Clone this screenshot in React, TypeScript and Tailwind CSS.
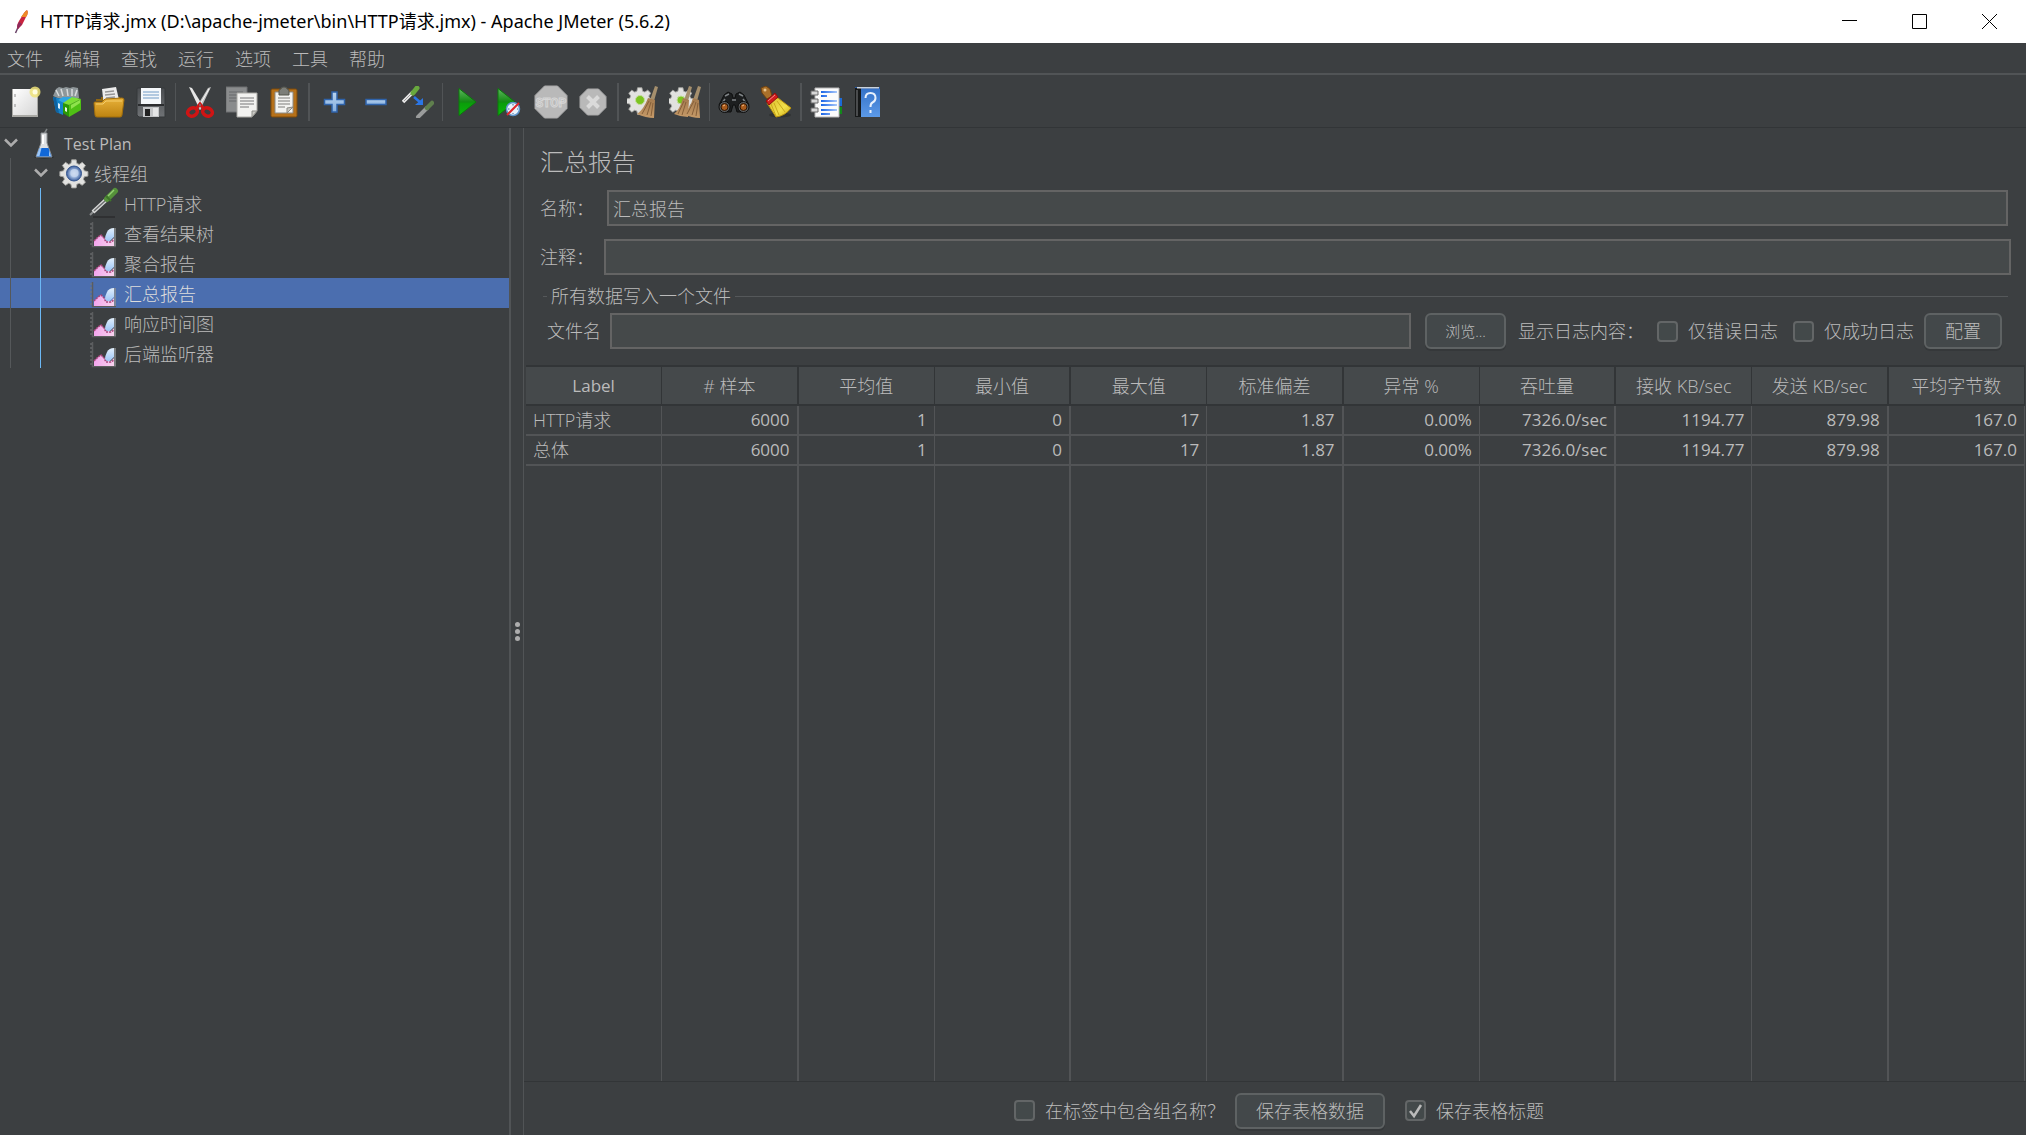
import React from 'react';

const menus = ['文件', '编辑', '查找', '运行', '选项', '工具', '帮助'];

const columns = ['Label', '# 样本', '平均值', '最小值', '最大值', '标准偏差', '异常 %', '吞吐量', '接收 KB/sec', '发送 KB/sec', '平均字节数'];

const rows = [
  ['HTTP请求', '6000', '1', '0', '17', '1.87', '0.00%', '7326.0/sec', '1194.77', '879.98', '167.0'],
  ['总体', '6000', '1', '0', '17', '1.87', '0.00%', '7326.0/sec', '1194.77', '879.98', '167.0'],
];

/* ---------- icons ---------- */

const Svg: React.FC<{ children: React.ReactNode }> = ({ children }) => (
  <svg viewBox="0 0 32 32" className="h-8 w-8 shrink-0" aria-hidden="true">
    {children}
  </svg>
);

// Shared gradients, referenced by id from every icon
const Gradients = () => (
  <svg className="absolute h-0 w-0" aria-hidden="true">
    <defs>
      <linearGradient id="paper" x1="0" y1="0" x2="1" y2="1">
        <stop offset="0" stopColor="#ffffff" />
        <stop offset="1" stopColor="#d6d6d6" />
      </linearGradient>
      <linearGradient id="gold" x1="0" y1="0" x2="0" y2="1">
        <stop offset="0" stopColor="#e8b13a" />
        <stop offset="1" stopColor="#bd8310" />
      </linearGradient>
      <linearGradient id="steel" x1="0" y1="0" x2="0" y2="1">
        <stop offset="0" stopColor="#4a4d50" />
        <stop offset="1" stopColor="#6f7275" />
      </linearGradient>
      <linearGradient id="play" x1="0" y1="0" x2="0" y2="1">
        <stop offset="0" stopColor="#5fb85f" />
        <stop offset="0.5" stopColor="#128a12" />
        <stop offset="0.55" stopColor="#0a9e0a" />
        <stop offset="1" stopColor="#0bb50b" />
      </linearGradient>
      <linearGradient id="plus" x1="0" y1="0" x2="0" y2="1">
        <stop offset="0" stopColor="#b9d3ee" />
        <stop offset="1" stopColor="#84afe0" />
      </linearGradient>
      <linearGradient id="straw" x1="0" y1="0" x2="0" y2="1">
        <stop offset="0" stopColor="#a3794d" />
        <stop offset="1" stopColor="#c69a68" />
      </linearGradient>
      <linearGradient id="yellow" x1="0" y1="0" x2="1" y2="1">
        <stop offset="0" stopColor="#d9bb2c" />
        <stop offset="0.6" stopColor="#f2e04a" />
        <stop offset="1" stopColor="#c7a312" />
      </linearGradient>
      <linearGradient id="cover" x1="0" y1="0" x2="0" y2="1">
        <stop offset="0" stopColor="#3572c8" />
        <stop offset="1" stopColor="#5c9ae8" />
      </linearGradient>
      <linearGradient id="ink" x1="0" y1="0" x2="1" y2="0">
        <stop offset="0" stopColor="#1763e6" />
        <stop offset="1" stopColor="#a9c8fb" />
      </linearGradient>
      <linearGradient id="pink" x1="0" y1="0" x2="1" y2="0">
        <stop offset="0" stopColor="#f3a5ee" />
        <stop offset="1" stopColor="#f8d3ee" />
      </linearGradient>
      <linearGradient id="sky" x1="0" y1="0" x2="0" y2="1">
        <stop offset="0" stopColor="#e2effc" />
        <stop offset="1" stopColor="#9cc5f7" />
      </linearGradient>
      <radialGradient id="hub">
        <stop offset="0" stopColor="#eef4ff" />
        <stop offset="0.5" stopColor="#a3bbe0" />
        <stop offset="1" stopColor="#3a5c9a" />
      </radialGradient>
    </defs>
  </svg>
);

const cog = 'M13.500 2h5l.8 4 2.600 1.100 3.400-2.300 3.500 3.500-2.300 3.400 1.100 2.600 4 .8v5l-4 .8-1.100 2.600 2.300 3.400-3.500 3.500-3.400-2.300-2.600 1.100-.8 4h-5l-.8-4-2.600-1.100-3.400 2.300-3.500-3.500 2.300-3.400-1.100-2.600-4-.8v-5l4-.8 1.100-2.600-2.300-3.400 3.500-3.500 3.400 2.300 2.600-1.100z';

const NewIcon = () => (
  <Svg>
    <path d="M3 3h26v28H3z" fill="#a9a9a5" />
    <path d="M4 3h24v26H4z" fill="url(#paper)" />
    <path d="M6 8v3M6 18v3" stroke="#8d8d8d" />
    <circle cx="26" cy="6" r="5.500" fill="#eee37a" opacity="0.85" />
    <circle cx="26" cy="6" r="2.500" fill="#fffde0" />
  </Svg>
);

const TemplatesIcon = () => (
  <Svg>
    <path d="M2 10l3-7 3-2 4 1 3-1 4 1 3-1 5 1 1 10-12 4z" fill="#8f979a" />
    <path d="M5 4l3 6M10 3l2 7M16 3l1 7M21 3l0 7M26 4l-2 6" stroke="#d6dadb" strokeWidth="1.500" />
    <path d="M2 11l10 2v16l-7-3z" fill="#1583c9" />
    <path d="M2 11l3 1 3 15-3-1z" fill="#0f62a0" />
    <path d="M7 14l5-3 12 0-4 5-7 1z" fill="#2fa4e4" />
    <path d="M7 17l2 1v5l-2-1z" fill="#d8eefb" />
    <path d="M12 17l6 2v12l-6-4z" fill="#2a9806" />
    <path d="M18 19l12-6v11l-12 7z" fill="#4fc014" />
    <path d="M12 17l9-6 9 2-12 6z" fill="#7ddf36" />
    <path d="M14 21l2 1v4l-2-1z" fill="#e8f6df" />
    <path d="M20 19l9-5v3l-9 6z" fill="#8fe24d" />
  </Svg>
);

const OpenIcon = () => (
  <Svg>
    <path d="M3 13h5v-2h19v4H3z" fill="#8f6612" />
    <path d="M9 3l14-2 4 17-16 2z" fill="#ececec" />
    <path d="M12 6l9-1M12 9l10-1M13 12l9-1" stroke="#969696" strokeWidth="1.500" />
    <path d="M1 17q0-1 1-1h7l3-3 17-1q2 0 2 2l-2 15q0 2-2 2H4q-2 0-2-2z" fill="url(#gold)" stroke="#a36f0b" />
    <path d="M3 18h7l3-3h16" fill="none" stroke="#f4cd6b" />
  </Svg>
);

const SaveIcon = () => (
  <Svg>
    <path d="M2 3q0-1 1-1h26q1 0 1 1v28H4l-2-2z" fill="url(#steel)" stroke="#35383a" />
    <path d="M6 2h20v16H6z" fill="#f4f7fa" />
    <path d="M8 6h16M8 9h16M8 12h16" stroke="#9cbbd8" strokeWidth="1.500" />
    <path d="M3 18h26v2H3z" fill="#2b2d2f" />
    <path d="M8 21h16v10H8z" fill="#c4c6c8" />
    <path d="M10 23h5v7h-5z" fill="#222" />
    <path d="M18 22h5v8h-5z" fill="#e5e6e7" />
  </Svg>
);

const CutIcon = () => (
  <Svg>
    <path d="M5 1l3 1 11 18-3 4z" fill="#e6e6e6" />
    <path d="M27 1l-3 1-11 18 3 4z" fill="#c3c3c3" />
    <path d="M25 3L15 20" stroke="#f8f8f8" />
    <ellipse cx="8.500" cy="26" rx="5" ry="4" transform="rotate(-25 8.500 26)" fill="none" stroke="#d01414" strokeWidth="3.500" />
    <ellipse cx="23.500" cy="26" rx="5" ry="4" transform="rotate(25 23.500 26)" fill="none" stroke="#d01414" strokeWidth="3.500" />
    <path d="M12 23l4-5 4 5" fill="none" stroke="#d01414" strokeWidth="3" />
    <circle cx="16" cy="19" r="1" fill="#777" />
  </Svg>
);

const CopyIcon = () => (
  <Svg>
    <path d="M0 1h21v25H0z" fill="#8a8c8d" stroke="#6f7172" />
    <path d="M3 6h14M3 9h14M3 12h14M3 15h14" stroke="#67696a" />
    <path d="M11 7h20v18l-5 6H11z" fill="#f2f2f0" stroke="#a9a9a5" />
    <path d="M14 12h14M14 15h14M14 18h14M14 21h9" stroke="#a0a0a0" strokeWidth="1.500" />
    <path d="M31 25h-5v6z" fill="#c9c9c5" stroke="#8e8e8a" />
  </Svg>
);

const PasteIcon = () => (
  <Svg>
    <rect x="3" y="3" width="26" height="28" rx="1.500" fill="#b6711a" stroke="#7d4a0b" />
    <path d="M7 6h18v21H7z" fill="#f3f3f1" stroke="#8b8b86" />
    <path d="M11 5q0-2 2-2 0-2 3-2t3 2q2 0 2 2v4H11z" fill="#7c7e79" stroke="#55574f" />
    <path d="M10 12h12M10 15h12M10 18h12M10 21h7" stroke="#a5a5a2" strokeWidth="1.500" />
    <path d="M25 21l-6 6v-5z" fill="#c9c9c4" stroke="#8b8b86" />
  </Svg>
);

const PlusIcon = () => (
  <Svg>
    <path d="M14 6h5v7.500h7.500v5H19V26h-5v-7.500H6.500v-5H14z" fill="url(#plus)" stroke="#2f63ab" strokeWidth="1.500" />
  </Svg>
);

const MinusIcon = () => (
  <Svg>
    <path d="M6 13.500h20v5H6z" fill="url(#plus)" stroke="#2f63ab" strokeWidth="1.500" />
  </Svg>
);

const ToggleIcon = () => (
  <Svg>
    <path d="M1 16L11 6" stroke="#e9e9e9" strokeWidth="3.500" />
    <path d="M2 15l8-8" stroke="#9a9a9a" />
    <path d="M11 7l4-5" stroke="#69a83e" strokeWidth="5" strokeLinecap="round" />
    <path d="M12 11l7 6" stroke="#2b76e6" strokeWidth="2.500" />
    <path d="M21 12v7h-8z" fill="#2b76e6" />
    <path d="M16 31l9-9" stroke="#9a9c9c" strokeWidth="4" strokeLinecap="round" />
    <path d="M25 22l5-5" stroke="#5f7f4d" strokeWidth="4.500" strokeLinecap="round" />
  </Svg>
);

const StartIcon = () => (
  <Svg>
    <path d="M8 2.500L25 16 8 29.500z" fill="url(#play)" stroke="#0b7a0b" />
  </Svg>
);

const StartNoPauseIcon = () => (
  <Svg>
    <path d="M5 2.500L22 16 5 29.500z" fill="url(#play)" stroke="#0b7a0b" />
    <circle cx="20" cy="23" r="6.500" fill="#e9f2fb" stroke="#5e93c9" strokeWidth="1.500" />
    <path d="M20 18v1.500M20 27v1M15 23h1.500M24 23h1M20 23l2-2" stroke="#3b6796" />
    <path d="M14 29l12-12" stroke="#e0262b" strokeWidth="2" />
  </Svg>
);

const StopIcon = () => (
  <svg viewBox="0 0 34 34" className="h-[34px] w-[34px] shrink-0" aria-hidden="true">
    <path d="M10.500 1h13L33 10.500v13L23.500 33h-13L1 23.500v-13z" fill="#b9b9b9" stroke="#aaaaaa" />
    <text x="17" y="21.500" textAnchor="middle" fontSize="12" fontWeight="700" fontFamily="Roboto, sans-serif" fill="#b9b9b9" stroke="#d6d6d6">
      STOP
    </text>
  </svg>
);

const ShutdownIcon = () => (
  <Svg>
    <path d="M10.500 3h11L29 10.500v11L21.500 29h-11L3 21.500v-11z" fill="#b9b9b9" stroke="#aaaaaa" />
    <path d="M10.500 10.500l11 11M21.500 10.500l-11 11" stroke="#dadada" strokeWidth="4" />
  </Svg>
);

const Gear: React.FC<{ transform: string }> = ({ transform }) => (
  <g transform={transform}>
    <path d={cog} fill="#e2e2e0" stroke="#a5a5a2" />
  </g>
);

const ClearIcon = () => (
  <Svg>
    <Gear transform="translate(-1 0) scale(0.86)" />
    <circle cx="13" cy="14" r="4.500" fill="#7cc420" stroke="#c4dd9c" />
    <path d="M28 0l3 1-4 14-4-1z" fill="#a58f6d" />
    <path d="M21 12l7 2-1 18q-8 0-17-4 7-5 11-16z" fill="url(#straw)" />
    <path d="M22 15l-7 13M24 16l-4 13M26 17l-2 13" stroke="#86603a" />
  </Svg>
);

const ClearAllIcon = () => (
  <Svg>
    <Gear transform="translate(-2 0) scale(0.86)" />
    <circle cx="12" cy="14" r="4" fill="#7cc420" stroke="#c4dd9c" />
    <path d="M20 0l3 1-4 14-4-1zM29 0l3 1-4 14-4-1z" fill="#a58f6d" />
    <path d="M14 12l6 2-1 17q-7 0-14-3 6-5 9-16z" fill="url(#straw)" />
    <path d="M24 12l6 2 1 18q-8 0-17-4 7-5 10-16z" fill="url(#straw)" />
    <path d="M15 15L9 28M17 16l-4 13M25 15l-7 13M27 16l-4 13M29 17l-2 13" stroke="#86603a" />
  </Svg>
);

const SearchIcon = () => (
  <Svg>
    <path d="M6 9l4-3 4 2 1 4h2l1-4 4-2 4 3 5 10-6 7h-6l-2-7h-2l-2 7H7l-6-7z" fill="#1d1f20" stroke="#0e0f0f" />
    <path d="M7 10l4-2M25 10l-4-2M7 13l-3 4M25 13l3 4M14 14h4" stroke="#7f8487" strokeWidth="1.500" />
    <circle cx="6.500" cy="21" r="5.500" fill="#5b5f61" stroke="#0d0d0d" />
    <circle cx="25.500" cy="21" r="5.500" fill="#5b5f61" stroke="#0d0d0d" />
    <circle cx="6.500" cy="21" r="3.500" fill="#a85a1c" stroke="#2c1504" />
    <circle cx="25.500" cy="21" r="3.500" fill="#a85a1c" stroke="#2c1504" />
    <path d="M5 20l2-1M24 20l2-1" stroke="#f0bb86" />
  </Svg>
);

const ResetIcon = () => (
  <Svg>
    <ellipse cx="20" cy="29" rx="11" ry="2.500" fill="#26292a" opacity="0.6" />
    <path d="M1 2l5-2 4 3 2 7-5 3-5-6z" fill="#a9702a" stroke="#6d4110" />
    <circle cx="5" cy="4" r="1.500" fill="#e9c58f" />
    <path d="M12 12l6 0 13 10q-6 8-15 9-5-8-9-14z" fill="url(#yellow)" stroke="#b8920d" />
    <path d="M14 17l5 12M17 15l8 11M11 18l5 12" stroke="#c9a91b" />
    <path d="M6 15l9-8 3 4-9 8z" fill="#d31d1d" stroke="#8e1010" />
    <path d="M8 15l7-6" stroke="#f08a8a" />
  </Svg>
);

const FunctionIcon = () => (
  <Svg>
    <path d="M28 12h4v8h-4z" fill="#1b6ad8" />
    <path d="M28 21h4v7h-4z" fill="#12891b" />
    <path d="M5 2h24v29H5z" fill="#fbfbfb" stroke="#b6b6b6" />
    <path d="M1 5h7v4H1zM1 13h7v4H1zM1 22h7v4H1z" fill="#d7d7d7" stroke="#6a6a6a" />
    <path d="M11 5h16v2H11zM11 9h6v2h-6zM11 14h16v2H11zM11 18h16v2H11zM11 23h16v2H11zM11 27h9v2h-9z" fill="url(#ink)" />
  </Svg>
);

const HelpIcon = () => (
  <Svg>
    <path d="M3 1h25v30H3z" fill="#2458a5" />
    <path d="M3 2h6v29H3z" fill="#17191a" />
    <path d="M4 4h2v26H4z" fill="#4a4c4e" />
    <path d="M9 3h19v28H9z" fill="url(#cover)" />
    <path d="M5 1h22v1.500H5z" fill="#c9d2dc" />
    <path d="M13.500 12q0-5 5-5t5 5q0 3-3 4.500-2 1-2 4.500M18.500 24v3" fill="none" stroke="#e7f0fc" strokeWidth="2" />
  </Svg>
);

const PlanIcon = () => (
  <Svg>
    <ellipse cx="16" cy="30" rx="10" ry="1.500" fill="#26292a" />
    <path d="M16 7l3-5" stroke="#7f8385" strokeWidth="1.500" />
    <path d="M13 6h6v10l5 14H8l5-14z" fill="#dfe1e3" stroke="#8b8f92" />
    <path d="M11.500 21h9l3 8.500h-15z" fill="#1168d8" />
    <path d="M8.500 29l3-8 2 0-2 8zM21 23l2 6h-2z" fill="#9cc6f6" />
    <path d="M15 8v9" stroke="#ffffff" strokeWidth="2" />
  </Svg>
);

const ThreadGroupIcon = () => (
  <Svg>
    <Gear transform="translate(1.500 1) scale(0.9)" />
    <circle cx="16" cy="16.500" r="7.500" fill="url(#hub)" stroke="#35568f" />
    <circle cx="16.500" cy="16" r="4" fill="#c7d6ee" opacity="0.8" />
  </Svg>
);

const SamplerIcon = () => (
  <Svg>
    <path d="M5 30h22" stroke="#2b2d2e" strokeWidth="1.500" />
    <path d="M2 28l4-4" stroke="#8d8f90" strokeWidth="2" />
    <path d="M5 25l14-13" stroke="#d9dada" strokeWidth="4" />
    <path d="M6 24l12-11" stroke="#6a6c6d" strokeWidth="1.500" />
    <path d="M19 12l8-8" stroke="#55913a" strokeWidth="6" strokeLinecap="round" />
    <path d="M20 9l6-6" stroke="#94cf72" strokeWidth="1.500" />
    <path d="M18 9l5 5" stroke="#3e752a" strokeWidth="2" />
  </Svg>
);

const ListenerIcon = () => (
  <Svg>
    <path d="M4.500 5v24.500H28" fill="none" stroke="#5b5d5f" strokeWidth="1.500" />
    <path d="M2 7h2M2 11h2M2 15h2M2 19h2M2 23h2M2 27h2" stroke="#77797b" />
    <path d="M27 11v18" stroke="#8d9092" strokeWidth="1.500" />
    <path d="M6 29v-5l4-4 3-2 3 3 3 3 4 0 3-3v8z" fill="url(#pink)" />
    <path d="M6 24l4-4 3-2 3 3 2 4h5l3-2" fill="none" stroke="#a8447c" strokeWidth="1.500" strokeDasharray="2 1" />
    <path d="M26 11q-5 0-7 4t-2 7q2 3 5 2l4-4z" fill="url(#sky)" />
  </Svg>
);

const FeatherIcon = () => (
  <svg viewBox="0 0 16 24" className="h-6 w-4 shrink-0" aria-hidden="true">
    <path d="M1.500 23L6 13" stroke="#6a4468" strokeWidth="1.500" />
    <path d="M10 3q3-4 3.500-2 .8 3-1.500 6L8 15l-4 4q-2-3 1-8z" fill="#c9243f" />
    <path d="M10 3q3-4 3.500-2 .8 3-1.500 6l-5 0z" fill="#ee8a25" />
    <path d="M4 19q-2-3 1-7l3 2z" fill="#8c2a5c" />
  </svg>
);

const toolGroups = [
  [
    { label: '新建', icon: NewIcon },
    { label: '模板', icon: TemplatesIcon },
    { label: '打开', icon: OpenIcon },
    { label: '保存', icon: SaveIcon },
  ],
  [
    { label: '剪切', icon: CutIcon },
    { label: '复制', icon: CopyIcon },
    { label: '粘贴', icon: PasteIcon },
  ],
  [
    { label: '全部展开', icon: PlusIcon },
    { label: '全部折叠', icon: MinusIcon },
    { label: '切换', icon: ToggleIcon },
  ],
  [
    { label: '启动', icon: StartIcon },
    { label: '不停顿开始', icon: StartNoPauseIcon },
    { label: '停止', icon: StopIcon },
    { label: '关闭', icon: ShutdownIcon },
  ],
  [
    { label: '清除', icon: ClearIcon },
    { label: '清除全部', icon: ClearAllIcon },
  ],
  [
    { label: '查找', icon: SearchIcon },
    { label: '重置搜索', icon: ResetIcon },
  ],
  [
    { label: '函数助手对话框', icon: FunctionIcon },
    { label: '帮助', icon: HelpIcon },
  ],
];

const treeNodes = [
  { label: 'Test Plan', level: 0, icon: PlanIcon, open: true },
  { label: '线程组', level: 1, icon: ThreadGroupIcon, open: true },
  { label: 'HTTP请求', level: 2, icon: SamplerIcon },
  { label: '查看结果树', level: 2, icon: ListenerIcon },
  { label: '聚合报告', level: 2, icon: ListenerIcon },
  { label: '汇总报告', level: 2, icon: ListenerIcon, selected: true },
  { label: '响应时间图', level: 2, icon: ListenerIcon },
  { label: '后端监听器', level: 2, icon: ListenerIcon },
];

/* ---------- controls ---------- */

const fieldClass = 'h-9 min-w-0 flex-1 border-2 border-[#646464] bg-[#45494a] px-1 outline-none';
const buttonClass = 'h-9 rounded-md border-2 border-[#5e6263] bg-[#43484a] shadow-[0_2px_0_#35383a]';

interface CheckProps {
  label: string;
  checked?: boolean;
}

const Check: React.FC<CheckProps> = ({ label, checked }) => (
  <label className="flex items-center gap-2.5 whitespace-nowrap">
    <span className="relative flex h-[21px] w-[21px]">
      <input
        type="checkbox"
        defaultChecked={checked}
        className="peer h-[21px] w-[21px] appearance-none rounded border-2 border-[#636667] bg-[#43494a]"
      />
      <svg viewBox="0 0 21 21" className="pointer-events-none absolute inset-0 hidden peer-checked:block" aria-hidden="true">
        <path d="M5 11l4 5 7-11" fill="none" stroke="#bbbbbb" strokeWidth="2.500" />
      </svg>
    </span>
    {label}
  </label>
);

const TitleBar = () => (
  <header className="flex h-[43px] items-center bg-white pl-3.5 pr-0.5 text-black">
    <FeatherIcon />
    <h1 className="flex-1 pb-0.5 pl-2.5 font-['Noto_Sans','Noto_Sans_CJK_SC',sans-serif] font-normal">
      HTTP请求.jmx (D:\apache-jmeter\bin\HTTP请求.jmx) - Apache JMeter (5.6.2)
    </h1>
    <button aria-label="最小化" className="flex h-full w-[70px] items-center justify-center">
      <svg viewBox="0 0 15 15" className="h-[15px] w-[15px]"><path d="M0 6.500h15" stroke="#000" /></svg>
    </button>
    <button aria-label="最大化" className="flex h-full w-[70px] items-center justify-center">
      <svg viewBox="0 0 15 15" className="h-[15px] w-[15px]"><path d="M.5.5h14v14H.5z" fill="none" stroke="#000" /></svg>
    </button>
    <button aria-label="关闭窗口" className="flex h-full w-[70px] items-center justify-center">
      <svg viewBox="0 0 15 15" className="h-[15px] w-[15px]"><path d="M0 0l15 15M15 0L0 15" stroke="#000" /></svg>
    </button>
  </header>
);

const Tree = () => (
  <ul className="w-[509px] shrink-0" aria-label="测试计划">
    {treeNodes.map((node) => (
      <li key={node.label}>
        <button className={`flex h-[30px] w-full items-center text-left ${node.selected ? 'bg-[#4b6eaf] text-[#dddddd]' : ''}`}>
          {node.level > 0 && <span className="ml-2.5 mr-[19px] h-full w-px bg-[#55585a]" />}
          {node.level > 1 && <span className="ml-2.5 mr-[19px] h-full w-px bg-[#6cb8f5]" />}
          <span className="flex w-7 pl-1">
            {node.open && (
              <svg viewBox="0 0 14 10" className="h-2.5 w-3.5" aria-hidden="true">
                <path d="M1 1.500l6 6 6-6" fill="none" stroke="#adadad" strokeWidth="2.500" />
              </svg>
            )}
          </span>
          <node.icon />
          <span className={`pl-1 pt-0.5 ${node.level === 0 ? 'text-base font-normal' : ''}`}>{node.label}</span>
        </button>
      </li>
    ))}
  </ul>
);

const ReportTable = () => (
  <table className="h-full w-full table-fixed border-separate border-spacing-0">
    <thead>
      <tr className="h-[41px]">
        {columns.map((name) => (
          <th key={name} className="border-y-2 border-r border-[#323537] bg-[#45494b] font-light even:border-r-2 first:text-[17px] first:font-normal">
            {name}
          </th>
        ))}
      </tr>
    </thead>
    <tbody>
      {rows.map((row) => (
        <tr key={row[0]} className="h-[30px]">
          {row.map((cell, i) => (
            <td
              key={i}
              className="border-b-2 border-r border-[#525456] px-[7px] text-right text-[17px] font-normal leading-7 first:text-left first:text-[18px] first:font-light even:border-r-2"
            >
              {cell}
            </td>
          ))}
        </tr>
      ))}
      <tr aria-hidden="true">
        {columns.map((name) => (
          <td key={name} className="border-r border-[#525456] even:border-r-2" />
        ))}
      </tr>
    </tbody>
  </table>
);

const Report = () => (
  <main className="flex min-w-0 flex-1 flex-col border-l border-[#515456]">
    <div className="pl-4 pr-[15px] pt-4">
      <h2 className="text-2xl leading-9">汇总报告</h2>
      <div className="mt-2.5 flex items-center pr-[3px]">
        <label htmlFor="name" className="w-[67px]">名称：</label>
        <input id="name" defaultValue="汇总报告" className={fieldClass} />
      </div>
      <div className="mt-[13px] flex items-center">
        <label htmlFor="comment" className="w-16">注释：</label>
        <input id="comment" className={fieldClass} />
      </div>
    </div>
    <fieldset className="ml-[19px] mr-[18px] mt-[7px] flex min-w-0 flex-col border-t border-[#55585a] pb-4">
      <legend className="ml-1 px-1 leading-7">所有数据写入一个文件</legend>
      <div className="flex items-center pl-1 pr-1.5 pt-[3px]">
        <label htmlFor="file" className="w-[63px]">文件名</label>
        <input id="file" className={fieldClass} />
        <button className={`${buttonClass} ml-3.5 w-[81px] text-[15px]`}>浏览...</button>
        <span className="ml-3 mr-[13px] whitespace-nowrap">显示日志内容：</span>
        <Check label="仅错误日志" />
        <span className="w-[15px]" />
        <Check label="仅成功日志" />
        <button className={`${buttonClass} ml-2.5 w-[78px]`}>配置</button>
      </div>
    </fieldset>
    <div className="min-h-0 flex-1 pl-0.5 pr-px">
      <ReportTable />
    </div>
    <footer className="flex h-[54px] items-center justify-center border-t border-[#323537] pl-2 pt-1">
      <Check label="在标签中包含组名称？" />
      <button className={`${buttonClass} ml-2.5 mr-5 w-[150px]`}>保存表格数据</button>
      <Check label="保存表格标题" checked />
    </footer>
  </main>
);

export default function App() {
  return (
    <div className="flex h-screen flex-col bg-[#3c3f41] font-['Open_Sans','Noto_Sans_CJK_SC',sans-serif] text-[18px] leading-6 text-[#bbbbbb]">
      <Gradients />
      <TitleBar />
      <nav className="flex h-8 items-center gap-[21px] border-b-2 border-[#515456] pl-[7px] pt-0.5 font-light">
        {menus.map((name) => (
          <button key={name}>{name}</button>
        ))}
      </nav>
      <div className="flex h-[53px] items-center border-b border-[#323537] pl-1 pt-0.5" role="toolbar">
        {toolGroups.map((group, i) => (
          <React.Fragment key={i}>
            {i > 0 && <span className={`mx-[3px] h-[38px] bg-[#515456] ${i % 2 ? 'w-px' : 'w-0.5'}`} />}
            {group.map((tool) => (
              <button key={tool.label} aria-label={tool.label} className="flex w-[42px] justify-center">
                <tool.icon />
              </button>
            ))}
          </React.Fragment>
        ))}
      </div>
      <div className="flex min-h-0 flex-1 font-light">
        <Tree />
        <div className="flex w-3.5 shrink-0 flex-col items-center justify-center gap-0.5 border-l-2 border-[#515456]">
          <span className="h-[5px] w-[5px] rounded-full bg-[#adadad]" />
          <span className="h-[5px] w-[5px] rounded-full bg-[#adadad]" />
          <span className="h-[5px] w-[5px] rounded-full bg-[#adadad]" />
        </div>
        <Report />
      </div>
    </div>
  );
}
